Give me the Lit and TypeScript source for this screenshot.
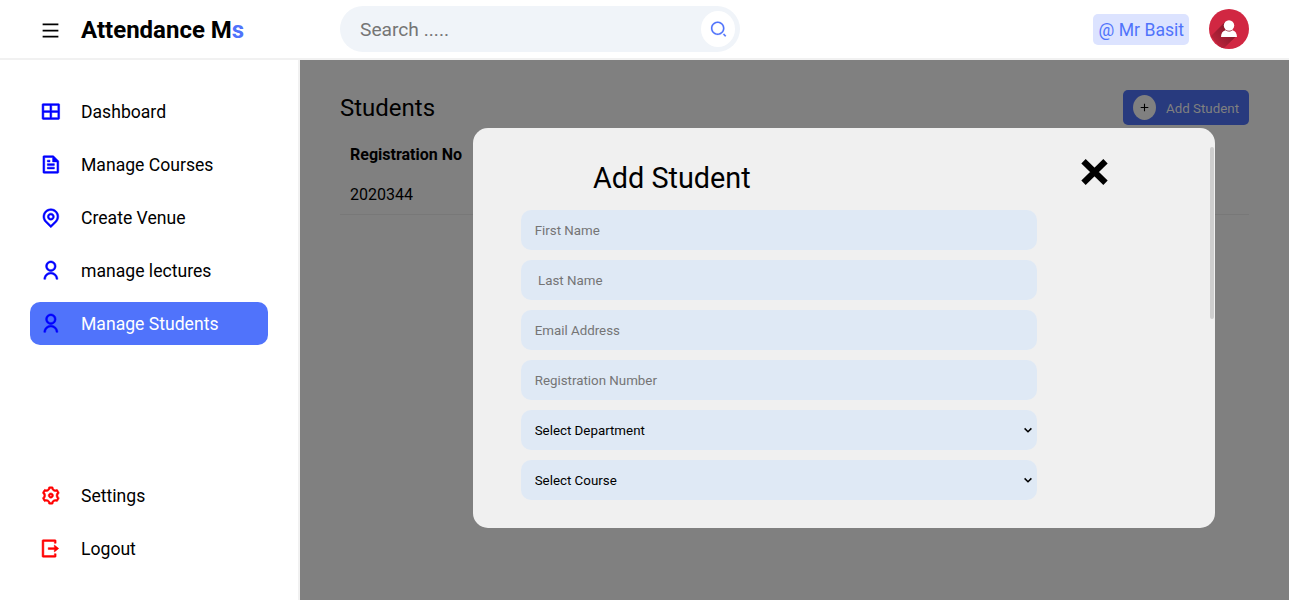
import { LitElement, html, css, svg } from "lit";
import { customElement } from "lit/decorators.js";
import { classMap } from "lit/directives/class-map.js";

const ICONS: Record<string, string> = {
  menu: "M3 4H21V6H3V4ZM3 11H21V13H3V11ZM3 18H21V20H3V18Z",
  search:
    "M11 2C15.968 2 20 6.032 20 11C20 15.968 15.968 20 11 20C6.032 20 2 15.968 2 11C2 6.032 6.032 2 11 2ZM11 18C14.8675 18 18 14.8675 18 11C18 7.1325 14.8675 4 11 4C7.1325 4 4 7.1325 4 11C4 14.8675 7.1325 18 11 18ZM19.4853 18.0711L22.3137 20.8995L20.8995 22.3137L18.0711 19.4853L19.4853 18.0711Z",
  grid: "M21 3C21.5523 3 22 3.44772 22 4V20C22 20.5523 21.5523 21 21 21H3C2.44772 21 2 20.5523 2 20V4C2 3.44772 2.44772 3 3 3H21ZM11 13H4V19H11V13ZM20 13H13V19H20V13ZM11 5H4V11H11V5ZM20 5H13V11H20V5Z",
  file: "M21 8V20.9932C21 21.5501 20.5552 22 20.0066 22H3.9934C3.44495 22 3 21.556 3 21.0082V2.9918C3 2.45531 3.4487 2 4.00221 2H14.9968L21 8ZM19 9H14V4H5V20H19V9ZM8 7H11V9H8V7ZM8 11H16V13H8V11ZM8 15H16V17H8V15Z",
  pin: "M12 20.8995L16.9497 15.9497C19.6834 13.2161 19.6834 8.78392 16.9497 6.05025C14.2161 3.31658 9.78392 3.31658 7.05025 6.05025C4.31658 8.78392 4.31658 13.2161 7.05025 15.9497L12 20.8995ZM12 23.7279L5.63604 17.364C2.12132 13.8492 2.12132 8.15076 5.63604 4.63604C9.15076 1.12132 14.8492 1.12132 18.364 4.63604C21.8787 8.15076 21.8787 13.8492 18.364 17.364L12 23.7279ZM12 13C13.1046 13 14 12.1046 14 11C14 9.89543 13.1046 9 12 9C10.8954 9 10 9.89543 10 11C10 12.1046 10.8954 13 12 13ZM12 15C9.79086 15 8 13.2091 8 11C8 8.79086 9.79086 7 12 7C14.2091 7 16 8.79086 16 11C16 13.2091 14.2091 15 12 15Z",
  user: "M4 22C4 17.5817 7.58172 14 12 14C16.4183 14 20 17.5817 20 22H18C18 18.6863 15.3137 16 12 16C8.68629 16 6 18.6863 6 22H4ZM12 13C8.685 13 6 10.315 6 7C6 3.685 8.685 1 12 1C15.315 1 18 3.685 18 7C18 10.315 15.315 13 12 13ZM12 11C14.21 11 16 9.21 16 7C16 4.79 14.21 3 12 3C9.79 3 8 4.79 8 7C8 9.21 9.79 11 12 11Z",
  settings:
    "M3.33946 17.0002C2.90721 16.2515 2.58277 15.4702 2.36133 14.6741C3.3338 14.1779 3.99972 13.1668 3.99972 12.0002C3.99972 10.8345 3.3348 9.824 2.36353 9.32741C2.81174 7.71651 3.65855 6.21627 4.86474 4.99001C5.7807 5.58416 6.98935 5.65534 7.99972 5.072C9.01009 4.48866 9.55277 3.40635 9.4962 2.31604C11.1613 1.8846 12.8847 1.90004 14.5031 2.31862C14.4475 3.40806 14.9901 4.48912 15.9997 5.072C17.0101 5.65532 18.2187 5.58416 19.1346 4.99007C19.7133 5.57986 20.2277 6.25151 20.66 7.00021C21.0922 7.7489 21.4167 8.53025 21.6381 9.32628C20.6656 9.82247 19.9997 10.8336 19.9997 12.0002C19.9997 13.166 20.6646 14.1764 21.6359 14.673C21.1877 16.2839 20.3409 17.7841 19.1347 19.0104C18.2187 18.4163 17.0101 18.3451 15.9997 18.9284C14.9893 19.5117 14.4467 20.5941 14.5032 21.6844C12.8382 22.1158 11.1148 22.1004 9.49633 21.6818C9.55191 20.5923 9.00929 19.5113 7.99972 18.9284C6.98938 18.3451 5.78079 18.4162 4.86484 19.0103C4.28617 18.4205 3.77172 17.7489 3.33946 17.0002ZM8.99972 17.1964C10.0911 17.8265 10.8749 18.8227 11.2503 19.9659C11.7486 20.0133 12.2502 20.014 12.7486 19.9675C13.1238 18.8237 13.9078 17.8268 14.9997 17.1964C16.0916 16.5659 17.347 16.3855 18.5252 16.6324C18.8146 16.224 19.0648 15.7892 19.2729 15.334C18.4706 14.4373 17.9997 13.2604 17.9997 12.0002C17.9997 10.74 18.4706 9.5632 19.2729 8.6665C19.1688 8.4405 19.0538 8.21822 18.9279 8.00021C18.802 7.78219 18.667 7.57148 18.5233 7.36842C17.3457 7.61476 16.0911 7.43414 14.9997 6.80405C13.9083 6.17395 13.1246 5.17768 12.7491 4.03455C12.2509 3.98714 11.7492 3.98646 11.2509 4.03292C10.8756 5.17671 10.0916 6.17364 8.99972 6.80405C7.9078 7.43447 6.65245 7.61494 5.47428 7.36803C5.18485 7.77641 4.93463 8.21117 4.72656 8.66637C5.52881 9.56311 5.99972 10.74 5.99972 12.0002C5.99972 13.2604 5.52883 14.4372 4.72656 15.3339C4.83067 15.5599 4.94564 15.7822 5.07152 16.0002C5.19739 16.2182 5.3324 16.4289 5.47612 16.632C6.65377 16.3857 7.90838 16.5663 8.99972 17.1964ZM11.9997 15.0002C10.3429 15.0002 8.99972 13.6571 8.99972 12.0002C8.99972 10.3434 10.3429 9.00021 11.9997 9.00021C13.6566 9.00021 14.9997 10.3434 14.9997 12.0002C14.9997 13.6571 13.6566 15.0002 11.9997 15.0002ZM11.9997 13.0002C12.552 13.0002 12.9997 12.5525 12.9997 12.0002C12.9997 11.4479 12.552 11.0002 11.9997 11.0002C11.4474 11.0002 10.9997 11.4479 10.9997 12.0002C10.9997 12.5525 11.4474 13.0002 11.9997 13.0002Z",
  logout:
    "M3 22C2.45 22 2 21.55 2 21V3C2 2.45 2.45 2 3 2H17C17.55 2 18 2.45 18 3V6H16V4H4V20H16V18H18V21C18 21.55 17.55 22 17 22H3ZM16 16V13H9V11H16V8L21 12L16 16Z",
  plus: "M11 11V5H13V11H19V13H13V19H11V13H5V11H11Z",
};

const icon = (name: string, cls = "") => html`
  <svg class="icon ${cls}" viewBox="0 0 24 24" aria-hidden="true">${svg`<path d=${ICONS[name]} />`}</svg>
`;

const MAIN_LINKS = [
  { icon: "grid", label: "Dashboard" },
  { icon: "file", label: "Manage Courses" },
  { icon: "pin", label: "Create Venue" },
  { icon: "user", label: "manage lectures" },
  { icon: "user", label: "Manage Students", active: true },
];
const FOOT_LINKS = [
  { icon: "settings", label: "Settings" },
  { icon: "logout", label: "Logout" },
];

@customElement("app-root")
export class AppRoot extends LitElement {
  static styles = css`
    :host {
      display: flex;
      flex-direction: column;
      position: relative;
      height: 100vh;
      overflow: hidden;
      background: #fff;
      color: #000;
      font-family: Roboto, sans-serif;
    }
    * { box-sizing: border-box; }
    .icon { display: block; width: 22px; height: 22px; fill: currentColor; flex: none; }

    .header {
      height: 60px;
      flex: none;
      display: flex;
      align-items: center;
      padding: 0 40px 0 0;
      border-bottom: 2px solid #f1f1f1;
    }
    .brand {
      width: 340px;
      display: flex;
      align-items: center;
      gap: 20px;
      padding: 2px 0 0 40px;
    }
    .brand .icon { width: 21px; height: 21px; }
    .logo { margin: 0; font-size: 24px; line-height: 28px; font-weight: 700; }
    .logo-accent { color: #5073fb; }
    .search {
      width: 400px;
      height: 46px;
      display: flex;
      align-items: center;
      padding: 0 5px 0 20px;
      border-radius: 23px;
      background: #f0f4f9;
    }
    .search-input {
      flex: 1;
      min-width: 0;
      padding: 1px 0 0;
      border: 0;
      outline: 0;
      background: transparent;
      font: 19.2px Roboto, sans-serif;
    }
    .search-btn {
      width: 34px;
      height: 36px;
      display: grid;
      place-items: center;
      border-radius: 50%;
      background: #fff;
      color: #5073fb;
    }
    .icon.small { width: 18px; height: 18px; stroke: currentColor; stroke-width: 0.2; overflow: visible; }
    .small path { transform: translateX(0.6px); }
    .profile { margin-left: auto; display: flex; align-items: center; gap: 20px; }
    .handle {
      height: 31px;
      padding: 6px 5px 0 5.6px;
      width: 96px;
      border-radius: 5px;
      background: #dce3ff;
      color: #5073fb;
      font-size: 17.6px;
      line-height: 21px;
      white-space: nowrap;
      margin-top: 1px;
    }
    .avatar { display: block; width: 40px; height: 40px; }

    .body { flex: 1; display: flex; min-height: 0; }
    .sidebar {
      width: 300px;
      flex: none;
      display: flex;
      flex-direction: column;
      justify-content: space-between;
      padding: 30px;
      border-right: 2px solid #f1f1f1;
    }
    .links { display: flex; flex-direction: column; gap: 10px; }
    .link {
      width: 238px;
      height: 43px;
      display: flex;
      align-items: center;
      gap: 20px;
      padding: 0 10px;
      border-radius: 10px;
      font-size: 17.6px;
      color: #000;
    }
    .link.active { background: #5073fb; color: #fff; }
    .link .icon { width: 21px; height: 21px; color: #00f; stroke: currentColor; stroke-width: 0.6; overflow: visible; }
    .link path { transform: translateX(0.4px); }
    .foot .link .icon { color: #f00; }

    .content { flex: 1; padding: 30px 40px; background: #808080; }
    .title-row { display: flex; justify-content: space-between; height: 35px; align-items: center; }
    .title { margin: 0; font-size: 24px; font-weight: 400; line-height: 28px; }
    .add {
      height: 35px;
      display: flex;
      align-items: center;
      gap: 10px;
      padding: 0 10px;
      border: 0;
      border-radius: 5px;
      background: #283a7e;
      color: #808080;
      font: 13.333px Roboto, sans-serif;
    }
    .add-label { padding-top: 2px; }
    .add-icon {
      width: 23px;
      height: 25px;
      display: grid;
      place-items: center;
      border-radius: 50%;
      background: #808080;
      color: #000;
    }
    .icon.tiny { width: 13px; height: 13px; }
    .table { margin-top: 10px; font-size: 16px; }
    .row { height: 40px; display: flex; align-items: center; padding: 0 10px; }
    .row.head { font-weight: 700; padding-bottom: 2px; }
    .row.data { border-bottom: 1px solid #787878; }

    .modal {
      position: absolute;
      left: 473px;
      top: 128px;
      width: 742px;
      height: 400px;
      border-radius: 15px;
      background: #f0f0f0;
      padding: 30px 48px 0;
    }
    .modal-head {
      display: flex;
      justify-content: space-between;
      padding: 0 58px 0 72px;
      height: 52px;
    }
    .modal-title { margin: 3px 0 0; font-size: 28.8px; line-height: 34px; font-weight: 400; }
    .close { display: block; width: 28px; height: 28px; }
    .form { display: flex; flex-direction: column; gap: 10px; width: 516px; }
    .field {
      display: block;
      width: 100%;
      height: 40px;
      padding: 0 13.7px;
      border: 0;
      outline: 0;
      border-radius: 10px;
      background-color: #dfe9f5;
      color: #000;
      font: 13.333px Roboto, sans-serif;
    }
    .select-wrap { display: grid; align-items: center; }
    .select-wrap > * { grid-area: 1 / 1; }
    .select { appearance: none; }
    .chevron {
      justify-self: end;
      width: 10px;
      height: 8px;
      margin: 0 4px 0 0;
      fill: none;
      stroke: #000;
      stroke-width: 1.5;
      pointer-events: none;
    }
    .thumb {
      position: absolute;
      right: 1px;
      top: 19px;
      width: 4px;
      height: 172px;
      border-radius: 2px;
      background: #cecece;
    }
  `;

  private link(l: { icon: string; label: string; active?: boolean }) {
    return html`<a class=${classMap({ link: true, active: !!l.active })}>${icon(l.icon)}<span>${l.label}</span></a>`;
  }

  private select(label: string) {
    return html`
      <div class="select-wrap">
        <select class="field select"><option>${label}</option></select>
        <svg class="chevron" viewBox="0 0 10 8"><path d="M1.6 2.4L5 5.8L8.4 2.4" /></svg>
      </div>
    `;
  }

  render() {
    return html`
      <header class="header">
        <div class="brand">
          ${icon("menu")}
          <h2 class="logo">Attendance M<span class="logo-accent">s</span></h2>
        </div>
        <div class="search">
          <input class="search-input" placeholder="Search ....." />
          <span class="search-btn">${icon("search", "small")}</span>
        </div>
        <div class="profile">
          <div class="handle">@ Mr Basit</div>
          <svg class="avatar" viewBox="0 0 40 40" aria-label="Profile">
            <defs>
              <clipPath id="disc"><circle cx="20" cy="20" r="20" /></clipPath>
              <linearGradient id="shade" x1="1" y1="0" x2="0" y2="1">
                <stop offset="0.25" stop-color="#85192b" />
                <stop offset="1" stop-color="#cf2740" />
              </linearGradient>
            </defs>
            <circle cx="20" cy="20" r="20" fill="#d12742" />
            <path d="M16 13L2 27L13 41L27.5 27Z" fill="url(#shade)" clip-path="url(#disc)" />
            <circle cx="20" cy="16.5" r="5.2" fill="#fff" />
            <path d="M12 28C12 24 14 21.8 16.6 21.2C18.5 22.9 21.5 22.9 23.4 21.2C26 21.8 28 24 28 28Z" fill="#fff" />
          </svg>
        </div>
      </header>
      <div class="body">
        <nav class="sidebar">
          <div class="links">${MAIN_LINKS.map((l) => this.link(l))}</div>
          <div class="links foot">${FOOT_LINKS.map((l) => this.link(l))}</div>
        </nav>
        <main class="content">
          <div class="title-row">
            <h2 class="title">Students</h2>
            <button class="add">
              <span class="add-icon">${icon("plus", "tiny")}</span><span class="add-label">Add Student</span>
            </button>
          </div>
          <div class="table">
            <div class="row head">Registration No</div>
            <div class="row data">2020344</div>
          </div>
        </main>
      </div>
      <section class="modal">
        <div class="modal-head">
          <h2 class="modal-title">Add Student</h2>
          <svg class="close" viewBox="0 0 28 28" aria-label="Close">
            <path d="M2.5 3.2L24.5 24.8M24.5 3.2L2.5 24.8" stroke="#000" stroke-width="6.2" />
          </svg>
        </div>
        <form class="form">
          <input class="field" placeholder="First Name" />
          <input class="field" placeholder=" Last Name" />
          <input class="field" placeholder="Email Address" />
          <input class="field" placeholder="Registration Number" />
          ${this.select("Select Department")} ${this.select("Select Course")}
        </form>
        <div class="thumb"></div>
      </section>
    `;
  }
}
